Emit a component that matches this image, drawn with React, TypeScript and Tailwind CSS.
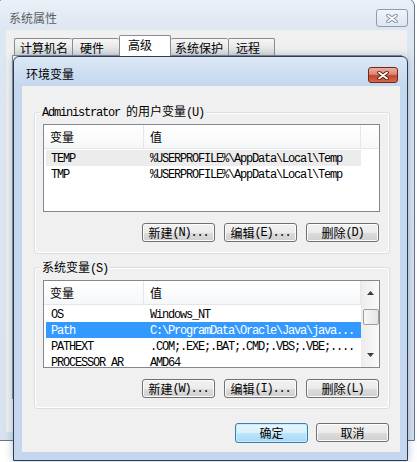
import React from "react";

type Row = { name: string; value: string; state?: "hover" | "selected" };

const userRows: Row[] = [
  { name: "TEMP", value: "%USERPROFILE%\\AppData\\Local\\Temp", state: "hover" },
  { name: "TMP", value: "%USERPROFILE%\\AppData\\Local\\Temp" },
];

const sysRows: Row[] = [
  { name: "OS", value: "Windows_NT" },
  { name: "Path", value: "C:\\ProgramData\\Oracle\\Java\\java...", state: "selected" },
  { name: "PATHEXT", value: ".COM;.EXE;.BAT;.CMD;.VBS;.VBE;...." },
  { name: "PROCESSOR_AR", value: "AMD64" },
];

const tabs = [
  { label: "计算机名", w: "w-[58px]", cls: "border-l pl-[5px]" },
  { label: "硬件", w: "w-[47px]", cls: "border-l pl-[7px]" },
  { label: "高级", w: "w-[52px]", cls: "border-x pl-[8px]", active: true },
  { label: "系统保护", w: "w-[57px]", cls: "pl-[4px]" },
  { label: "远程", w: "w-[47px]", cls: "border-x pl-[7px]" },
];

const CJK_RE = /([\u3000-\u9fff\uff00-\uffef]+)/;

// SimSun-ish mix: CJK in Noto, ASCII narrow mono
const Txt = ({ s }: { s: string }) => (
  <>
    {s
      .split(CJK_RE)
      .filter(Boolean)
      .map((part, i) =>
        CJK_RE.test(part) ? (
          <span key={i} className="font-['Noto_Sans_CJK_SC',sans-serif] tracking-normal">
            {part}
          </span>
        ) : (
          <span key={i} className="font-['Liberation_Mono',monospace] tracking-[-1.2px] whitespace-pre">
            {part}
          </span>
        )
      )}
  </>
);

const XGlyph = ({ dark }: { dark: string }) => (
  <svg width="12" height="9" viewBox="0 0 12 9">
    <path d="M2 1.5 L10 7.5 M10 1.5 L2 7.5" stroke={dark} strokeWidth="3.6" strokeLinecap="round" />
    <path d="M2 1.5 L10 7.5 M10 1.5 L2 7.5" stroke="#ffffff" strokeWidth="1.8" strokeLinecap="round" />
  </svg>
);

const Btn = ({ label, primary }: { label: string; primary?: boolean }) => (
  <button
    className={
      primary
        ? "flex h-[20px] w-[73px] items-center justify-center rounded-[3px] border border-[#3c7fb1] bg-[linear-gradient(to_bottom,#eaf6fd,#d9f0fc_50%,#bee6fd_50%,#a7d9f5)] text-[12px] leading-[14px] text-black shadow-[inset_0_0_0_1px_#c6ebfb]"
        : "flex h-[19px] w-[73px] items-center justify-center rounded-[3px] border border-[#707070] bg-[linear-gradient(to_bottom,#f2f2f2,#ebebeb_50%,#dddddd_50%,#cfcfcf)] text-[12px] leading-[14px] text-black shadow-[inset_0_0_0_1px_#fcfcfc]"
    }
  >
    <Txt s={label} />
  </button>
);

const Arrow = ({ up }: { up?: boolean }) => (
  <svg width="7" height="4" viewBox="0 0 7 4">
    <path d={up ? "M0 4 L3.5 0 L7 4 Z" : "M0 0 L3.5 4 L7 0 Z"} fill="#3c3c3c" />
  </svg>
);

const ScrollBar = () => (
  <div className="flex w-[18px] shrink-0 flex-col items-center border-l border-[#ececec] bg-[linear-gradient(to_right,#ededed,#fafafa)]">
    <div className="flex h-[17px] w-full items-end justify-center pb-[3px]">
      <Arrow up />
    </div>
    <div className="mt-[11px] h-[16px] w-[16px] rounded-[2px] border border-[#9e9e9e] bg-[linear-gradient(to_right,#f7f7f7,#e4e4e4)]" />
    <div className="flex-1" />
    <div className="flex h-[17px] w-full items-start justify-center pt-[3px]">
      <Arrow />
    </div>
  </div>
);

const Header = () => (
  <div className="flex h-[24px] shrink-0 border-b border-[#e5e5e5] bg-[linear-gradient(to_bottom,#ffffff,#f6f7f9)] font-['Noto_Sans_CJK_SC',sans-serif] leading-[23px]">
    <div className="w-[100px] border-r border-[#e3e6ea] pl-[6px]">变量</div>
    <div className="w-[217px] border-r border-[#e3e6ea] pl-[6px]">值</div>
  </div>
);

const ListBox = ({ rows, scroll }: { rows: Row[]; scroll?: boolean }) => (
  <div className="flex h-[88px] w-[337px] shrink-0 overflow-hidden border border-[#828790] bg-white text-[12px] text-black">
    <div className="flex w-[317px] shrink-0 flex-col">
      <Header />
      <div className="mt-[1px] flex flex-col">
        {rows.map((r) => (
          <div
            key={r.name}
            className={
              r.state === "selected"
                ? "ml-[2px] flex h-[16px] w-[315px] shrink-0 bg-[#3399ff] leading-[16px] text-white"
                : r.state === "hover"
                ? "ml-[2px] flex h-[16px] w-[315px] shrink-0 bg-[#ececec] leading-[16px]"
                : "ml-[2px] flex h-[16px] w-[315px] shrink-0 leading-[16px]"
            }
          >
            <div className="w-[98px] overflow-hidden whitespace-nowrap pl-[5px]">
              <Txt s={r.name} />
            </div>
            <div className="flex-1 overflow-hidden whitespace-nowrap pl-[6px]">
              <Txt s={r.value} />
            </div>
          </div>
        ))}
      </div>
    </div>
    {scroll ? (
      <ScrollBar />
    ) : (
      <div className="h-[24px] flex-1 border-b border-[#e5e5e5] bg-[linear-gradient(to_bottom,#ffffff,#f6f7f9)]" />
    )}
  </div>
);

const Group = ({
  label,
  rows,
  scroll,
  buttons,
  top,
}: {
  label: string;
  rows: Row[];
  scroll?: boolean;
  buttons: string[];
  top: "first" | "second";
}) => (
  <div
    className={
      top === "first"
        ? "relative ml-[12px] mt-[26px] flex h-[142px] w-[356px] shrink-0 flex-col rounded-[3px] border border-[#d5dfe5] pl-[8px] pr-[9px] pt-[11px] shadow-[inset_0_0_0_1px_#ffffff]"
        : "relative ml-[12px] mt-[13px] flex h-[142px] w-[356px] shrink-0 flex-col rounded-[3px] border border-[#d5dfe5] pl-[8px] pr-[9px] pt-[12px] shadow-[inset_0_0_0_1px_#ffffff]"
    }
  >
    <div
      className={
        top === "first"
          ? "absolute left-[5px] top-[-9px] bg-[#f0f0f0] px-[2px] text-[12px] leading-[14px] text-black"
          : "absolute left-[5px] top-[-8px] bg-[#f0f0f0] px-[2px] text-[12px] leading-[14px] text-black"
      }
    >
      <Txt s={label} />
    </div>
    <ListBox rows={rows} scroll={scroll} />
    <div className="mt-[11px] flex justify-end gap-[9px] pr-[1px]">
      {buttons.map((b) => (
        <Btn key={b} label={b} />
      ))}
    </div>
  </div>
);

export default function App() {
  return (
    <div className="relative h-[462px] w-[417px] overflow-hidden bg-white">
      {/* 系统属性 (inactive, behind) */}
      <div className="absolute left-[-3px] top-[-2px] flex h-[443px] w-[418px] flex-col rounded-t-[8px] border border-[#6a7484] bg-[linear-gradient(to_bottom,#eaf0f7,#dde7f2_31px,#d8e3ef)]">
        <div className="flex h-[31px] shrink-0 items-start justify-between">
          <span className="ml-[11px] mt-[11px] font-['Noto_Sans_CJK_SC',sans-serif] text-[12px] leading-[16px] text-[#5e5e5e]">
            系统属性
          </span>
          <div className="mr-[6px] mt-[10px] flex h-[18px] w-[32px] items-center justify-center rounded-[3px] border border-[#8d9cb1] bg-[linear-gradient(to_bottom,#f1f5fa,#dde5ef)]">
            <XGlyph dark="#7d8a9c" />
          </div>
        </div>
        <div className="mb-[8px] ml-[8px] mr-[7px] flex flex-1 flex-col bg-[#f0f0f0]">
          <div className="ml-[8px] mt-[5px] flex h-[20px] items-end">
            {tabs.map((t) =>
              t.active ? (
                <div
                  key={t.label}
                  className={`relative z-10 -mb-[1px] h-[21px] ${t.w} ${t.cls} rounded-t-[2px] border-t border-[#898c95] bg-white pt-[1px] font-['Noto_Sans_CJK_SC',sans-serif] text-[12px] leading-[16px] text-black`}
                >
                  {t.label}
                </div>
              ) : (
                <div
                  key={t.label}
                  className={`h-[17px] ${t.w} ${t.cls} rounded-t-[2px] border-t border-[#898c95] bg-[linear-gradient(to_bottom,#f6f6f6,#e9e9e9_50%,#dddddd)] pt-[1px] font-['Noto_Sans_CJK_SC',sans-serif] text-[12px] leading-[16px] text-black`}
                >
                  {t.label}
                </div>
              )
            )}
          </div>
          <div className="ml-[6px] h-[344px] w-[390px] border border-[#898c95] bg-white" />
        </div>
      </div>

      {/* 环境变量 dialog */}
      <div className="absolute left-[13px] top-[56px] flex h-[405px] w-[395px] flex-col rounded-t-[6px] border border-[#2c3d52] bg-[linear-gradient(to_bottom,#dce8f5,#c3d7ee_29px,#c4d7ee)] shadow-[0_0_10px_rgba(40,80,130,0.35)]">
        <div className="flex h-[29px] shrink-0 items-start justify-between">
          <span className="ml-[12px] mt-[9px] font-['Noto_Sans_CJK_SC',sans-serif] text-[12px] leading-[16px] text-black">
            环境变量
          </span>
          <div className="mr-[9px] mt-[10px] flex h-[16px] w-[30px] items-center justify-center rounded-[3px] border border-[#7a2416] bg-[linear-gradient(to_bottom,#eab0a2,#d98672_45%,#c5452d_55%,#d26a4f)]">
            <XGlyph dark="#5a1a10" />
          </div>
        </div>
        <div className="ml-[8px] mr-[7px] flex h-[366px] flex-col bg-[#f0f0f0]">
          <Group
            top="first"
            label="Administrator 的用户变量(U)"
            rows={userRows}
            buttons={["新建(N)...", "编辑(E)...", "删除(D)"]}
          />
          <Group
            top="second"
            label="系统变量(S)"
            rows={sysRows}
            scroll
            buttons={["新建(W)...", "编辑(I)...", "删除(L)"]}
          />
          <div className="mt-[14px] flex justify-end gap-[8px] pr-[11px]">
            <Btn label="确定" primary />
            <Btn label="取消" />
          </div>
        </div>
      </div>
    </div>
  );
}
